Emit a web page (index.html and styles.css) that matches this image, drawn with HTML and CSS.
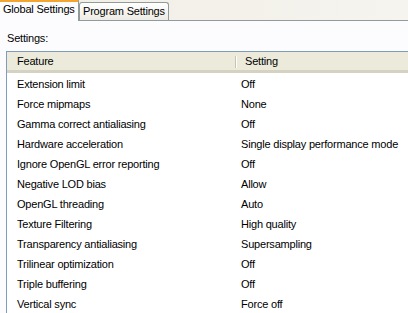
FILE: index.html
```html
<!DOCTYPE html>
<html lang="en">
<head>
    <meta charset="UTF-8">
    <title>Global Settings</title>
    <link rel="stylesheet" href="styles.css">
</head>
<body>
    <div class="tabs">
        <div class="tab active">Global Settings</div>
        <div class="tab">Program Settings</div>
    </div>

    <div class="panel">
        <div class="caption">Settings:</div>

        <div class="list">
            <div class="list-head">
                <div class="col-feature">Feature</div>
                <div class="col-setting">Setting</div>
            </div>
            <div class="row"><div class="col-feature">Extension limit</div><div class="col-setting">Off</div></div>
            <div class="row"><div class="col-feature">Force mipmaps</div><div class="col-setting">None</div></div>
            <div class="row"><div class="col-feature">Gamma correct antialiasing</div><div class="col-setting">Off</div></div>
            <div class="row"><div class="col-feature">Hardware acceleration</div><div class="col-setting">Single display performance mode</div></div>
            <div class="row"><div class="col-feature">Ignore OpenGL error reporting</div><div class="col-setting">Off</div></div>
            <div class="row"><div class="col-feature">Negative LOD bias</div><div class="col-setting">Allow</div></div>
            <div class="row"><div class="col-feature">OpenGL threading</div><div class="col-setting">Auto</div></div>
            <div class="row"><div class="col-feature">Texture Filtering</div><div class="col-setting">High quality</div></div>
            <div class="row"><div class="col-feature">Transparency antialiasing</div><div class="col-setting">Supersampling</div></div>
            <div class="row"><div class="col-feature">Trilinear optimization</div><div class="col-setting">Off</div></div>
            <div class="row"><div class="col-feature">Triple buffering</div><div class="col-setting">Off</div></div>
            <div class="row"><div class="col-feature">Vertical sync</div><div class="col-setting">Force off</div></div>
        </div>
    </div>
</body>
</html>
```

FILE: styles.css
```css
* {
    margin: 0;
    padding: 0;
    box-sizing: border-box;
}

body {
    background-color: #fcfcfe;
    font-family: 'Liberation Sans', Arial, sans-serif;
    font-size: 11px;
    letter-spacing: -0.2px;
    color: #000;
    overflow: hidden;
}

/* tab strip */
.tabs {
    display: flex;
    align-items: flex-end;
    height: 21px;
    background: linear-gradient(to right, #f1efe4, #f3f1ea 60%, #f5f4ef);
    border-bottom: 1px solid #919b9c;
}

.tab {
    height: 18px;
    padding: 0 3px;
    line-height: 17px;
    white-space: nowrap;
    border: 1px solid #919b9c;
    border-bottom: none;
    border-radius: 3px 3px 0 0;
    background: linear-gradient(to bottom, #ffffff, #f4f3ee 60%, #ecebe5);
}

.tab.active {
    width: 79px;
    height: 22px;
    margin-bottom: -1px;
    padding: 0 3px;
    line-height: 15px;
    border: none;
    border-top: 3px solid #f3a532;
    border-right: 1px solid #919b9c;
    border-radius: 0;
    background: #fcfcfe;
}

/* panel */
.panel {
    padding: 11px 0 0 6px;
}

.caption {
    padding-left: 1px;
    line-height: 13px;
    margin-bottom: 6px;
}

.list {
    border-left: 1px solid #7f9db9;
    border-top: 1px solid #7f9db9;
    background: #fff;
}

.list-head {
    display: flex;
    height: 21px;
    line-height: 19px;
    background: #ebeadb;
    border-bottom: 3px solid #d6d2c2;
}

.list-head .col-setting {
    position: relative;
    padding-left: 10px;
}

.list-head .col-setting::before {
    content: "";
    position: absolute;
    left: 0;
    top: 4px;
    height: 12px;
    border-left: 1px solid #c7c5b2;
    border-right: 1px solid #fff;
}

.col-feature {
    width: 228px;
    padding-left: 10px;
    white-space: nowrap;
}

.col-setting {
    flex: 1;
    padding-left: 6px;
    white-space: nowrap;
}

.row {
    display: flex;
    height: 20px;
    line-height: 22px;
}
```
